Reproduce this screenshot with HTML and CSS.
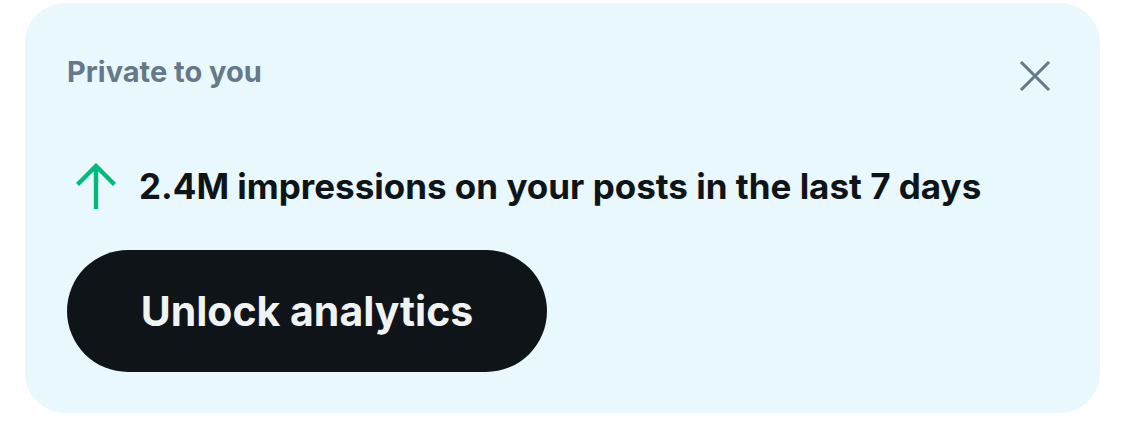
FILE: index.html
```html
<!DOCTYPE html>
<html>
<head>
<meta charset="utf-8">
<link rel="stylesheet" href="styles.css">
</head>
<body>
<div class="card">
  <div class="head">
    <span class="label">Private to you</span>
    <button class="close" aria-label="Close">
      <svg viewBox="0 0 40 40" width="34" height="34"><path d="M3.5 3.5 L36.5 36.5 M36.5 3.5 L3.5 36.5" stroke="#66788a" stroke-width="3.6" fill="none"/></svg>
    </button>
  </div>
  <div class="stat">
    <svg class="arrow" viewBox="0 0 40 46" width="40" height="46"><path d="M20 46 V3 M1.5 21.5 L20 3 L38.5 21.5" stroke="#00ba7c" stroke-width="4.4" fill="none"/></svg>
    <span class="stat-text">2.4M impressions on your posts in the last 7 days</span>
  </div>
  <button class="unlock">Unlock analytics</button>
</div>
</body>
</html>
```
FILE: styles.css
```css
html, body { margin: 0; padding: 0; background: #ffffff; }
body { font-family: Inter, "Noto Sans", sans-serif; }
.card {
  margin: 3px 25px 0 25px;
  height: 410px;
  box-sizing: border-box;
  background: #e8f8fd;
  border-radius: 40px;
  padding: 47px 42px 0 42px;
  display: flex;
  flex-direction: column;
}
.head { display: flex; justify-content: space-between; align-items: center; height: 42px; }
.label { font-size: 29px; font-weight: 700; color: #66788a; }
.close { background: none; border: 0; padding: 0; margin-right: 6px; margin-top: 10px; display: flex; }
.stat { display: flex; align-items: center; margin-top: 71px; gap: 23px; padding-left: 9px; }
.stat-text { font-size: 35px; font-weight: 700; color: #0f1419; }
.unlock {
  margin-top: 41px;
  align-self: flex-start;
  width: 480px;
  height: 122px;
  border: 0;
  border-radius: 61px;
  background: #0f1419;
  color: #eff3f4;
  font-family: inherit;
  font-size: 41px;
  font-weight: 700;
  padding: 0;
}
```
